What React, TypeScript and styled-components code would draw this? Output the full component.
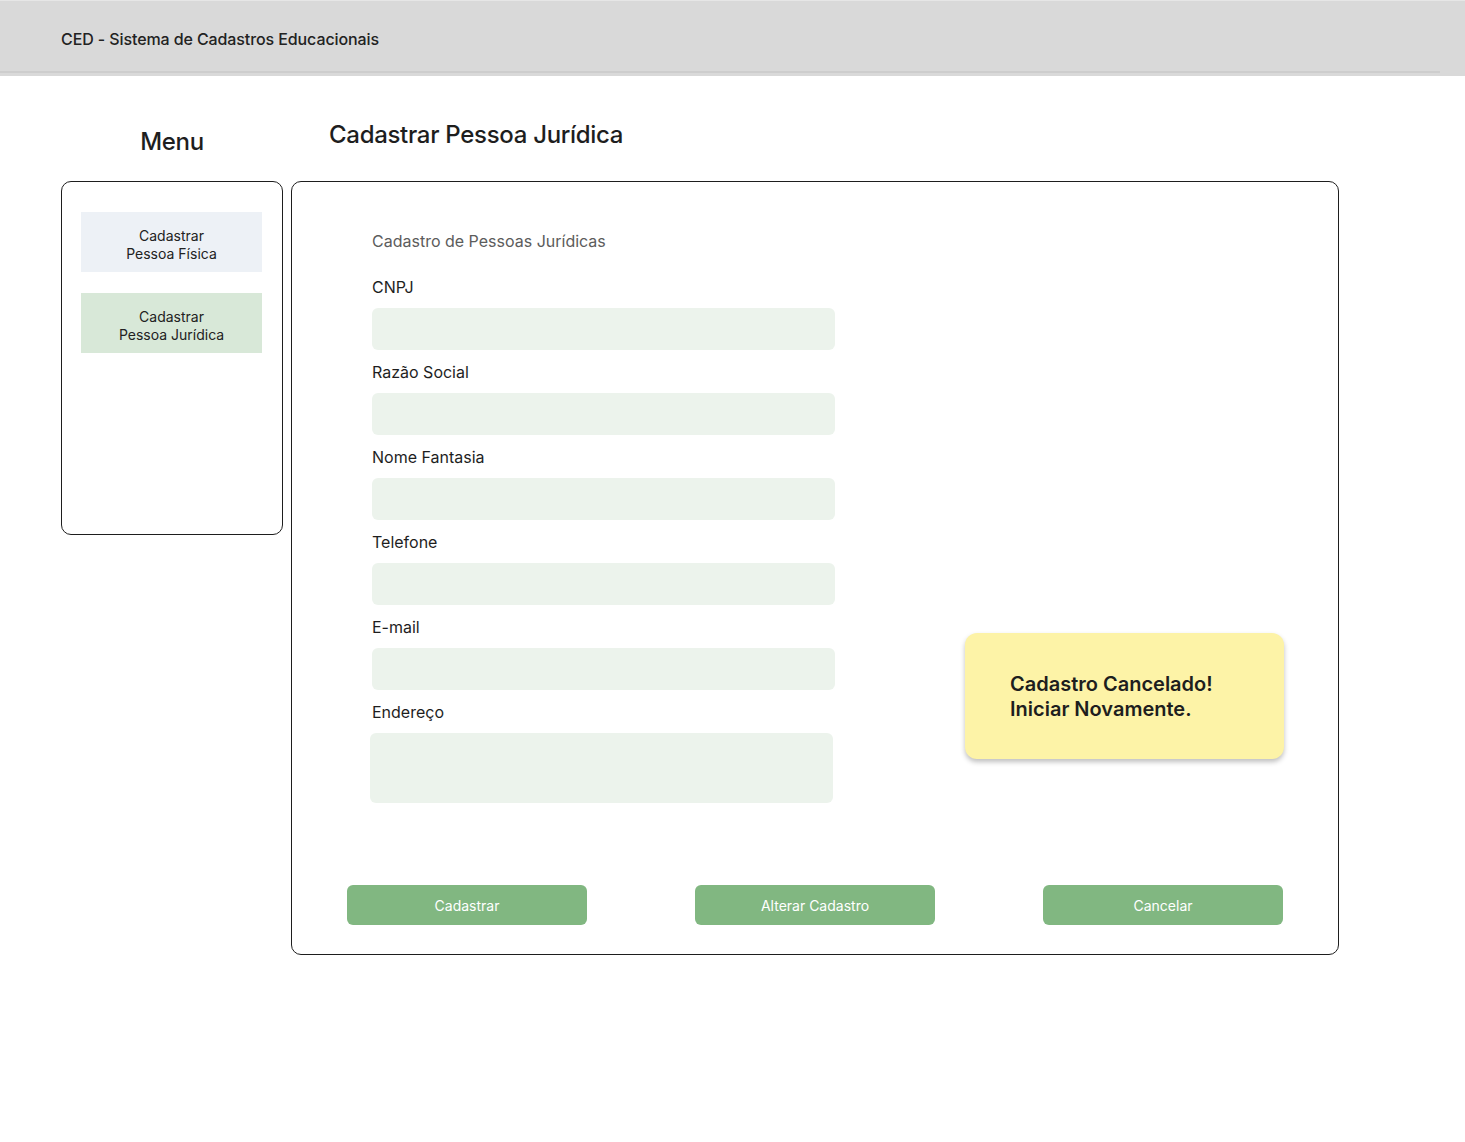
import React from "react";
import styled, { createGlobalStyle } from "styled-components";

const Global = createGlobalStyle`
  html, body { margin: 0; padding: 0; background: #ffffff; }
  body { font-family: Inter, "Noto Sans", "Liberation Sans", sans-serif; color: #1e1e1e; }
  * { box-sizing: border-box; }
`;

const Header = styled.header`
  background: #d9d9d9;
  height: 76px;
  border-top: 1px solid #e6e6e6;
`;

const HeaderBar = styled.div`
  width: 1440px;
  height: 72px;
  border-bottom: 2px solid #cdcdcd;
  display: flex;
  align-items: center;
  padding-left: 61px;
  padding-top: 6px;
`;

const HeaderTitle = styled.span`
  font-size: 16px;
  font-weight: 500;
  letter-spacing: -0.1px;
  color: #222;
`;

const Content = styled.main`
  display: grid;
  grid-template-columns: 222px 1048px;
  column-gap: 8px;
  padding-left: 61px;
`;

const Title = styled.h1<{ $top: number; $indent?: number; $center?: boolean }>`
  margin: ${(p) => p.$top}px 0 0 0;
  height: ${(p) => 105 - p.$top}px;
  padding-left: ${(p) => p.$indent ?? 0}px;
  text-align: ${(p) => (p.$center ? "center" : "left")};
  font-size: 24px;
  line-height: 30px;
  font-weight: 500;
  letter-spacing: -0.3px;
  color: #1e1e1e;
`;

const MenuBox = styled.nav`
  height: 354px;
  border: 1px solid #1e1e1e;
  border-radius: 10px;
  padding: 30px 20px 0 19px;
  display: flex;
  flex-direction: column;
  gap: 21px;
`;

const MenuItem = styled.div<{ $active?: boolean }>`
  height: 60px;
  width: 181px;
  padding-top: 6px;
  background: ${(p) => (p.$active ? "#d8e8d8" : "#edf1f6")};
  display: flex;
  align-items: center;
  justify-content: center;
  text-align: center;
  font-size: 14px;
  line-height: 18px;
  color: #222;
`;

const MainBox = styled.section`
  position: relative;
  height: 774px;
  border: 1px solid #1e1e1e;
  border-radius: 10px;
  display: flex;
  flex-direction: column;
`;

const Form = styled.div`
  padding: 49px 0 0 80px;
  display: flex;
  flex-direction: column;
`;

const Subtitle = styled.div`
  font-size: 16px;
  line-height: 20px;
  color: #5c5c5c;
  margin-bottom: 26px;
`;

const Field = styled.div`
  display: flex;
  flex-direction: column;
  margin-bottom: 12px;
`;

const Label = styled.label`
  font-size: 16px;
  line-height: 20px;
  color: #1e1e1e;
  margin-bottom: 11px;
`;

const Input = styled.div<{ $tall?: boolean; $shift?: number }>`
  width: 463px;
  height: ${(p) => (p.$tall ? 70 : 42)}px;
  margin-left: ${(p) => p.$shift ?? 0}px;
  background: #ecf3ec;
  border-radius: 6px;
`;

const Buttons = styled.div`
  margin-top: auto;
  margin-bottom: 29px;
  padding: 0 55px;
  display: flex;
  justify-content: space-between;
`;

const Button = styled.button`
  width: 240px;
  height: 40px;
  border: none;
  border-radius: 6px;
  background: #81b781;
  color: #ffffff;
  font-family: inherit;
  font-size: 14px;
  cursor: pointer;
`;

const Toast = styled.div`
  position: absolute;
  left: 673px;
  top: 451px;
  width: 319px;
  height: 126px;
  background: #fdf3a7;
  border-radius: 12px;
  box-shadow: 0 3px 5px rgba(0, 0, 0, 0.25);
  padding: 39px 0 0 45px;
  font-size: 20px;
  line-height: 25px;
  font-weight: 600;
  color: #1e1e1e;
`;

const fields = ["CNPJ", "Razão Social", "Nome Fantasia", "Telefone", "E-mail"];

export default function App() {
  return (
    <>
      <Global />
      <Header>
        <HeaderBar>
          <HeaderTitle>CED - Sistema de Cadastros Educacionais</HeaderTitle>
        </HeaderBar>
      </Header>
      <Content>
        <Title $top={51} $center>Menu</Title>
        <Title $top={44} $indent={38}>Cadastrar Pessoa Jurídica</Title>
        <div>
          <MenuBox>
            <MenuItem>
              Cadastrar
              <br />
              Pessoa Física
            </MenuItem>
            <MenuItem $active>
              Cadastrar
              <br />
              Pessoa Jurídica
            </MenuItem>
          </MenuBox>
        </div>
        <MainBox>
          <Form>
            <Subtitle>Cadastro de Pessoas Jurídicas</Subtitle>
            {fields.map((f) => (
              <Field key={f}>
                <Label>{f}</Label>
                <Input />
              </Field>
            ))}
            <Field>
              <Label>Endereço</Label>
              <Input $tall $shift={-2} />
            </Field>
          </Form>
          <Buttons>
            <Button>Cadastrar</Button>
            <Button>Alterar Cadastro</Button>
            <Button>Cancelar</Button>
          </Buttons>
          <Toast>
            Cadastro Cancelado!
            <br />
            Iniciar Novamente.
          </Toast>
        </MainBox>
      </Content>
    </>
  );
}
